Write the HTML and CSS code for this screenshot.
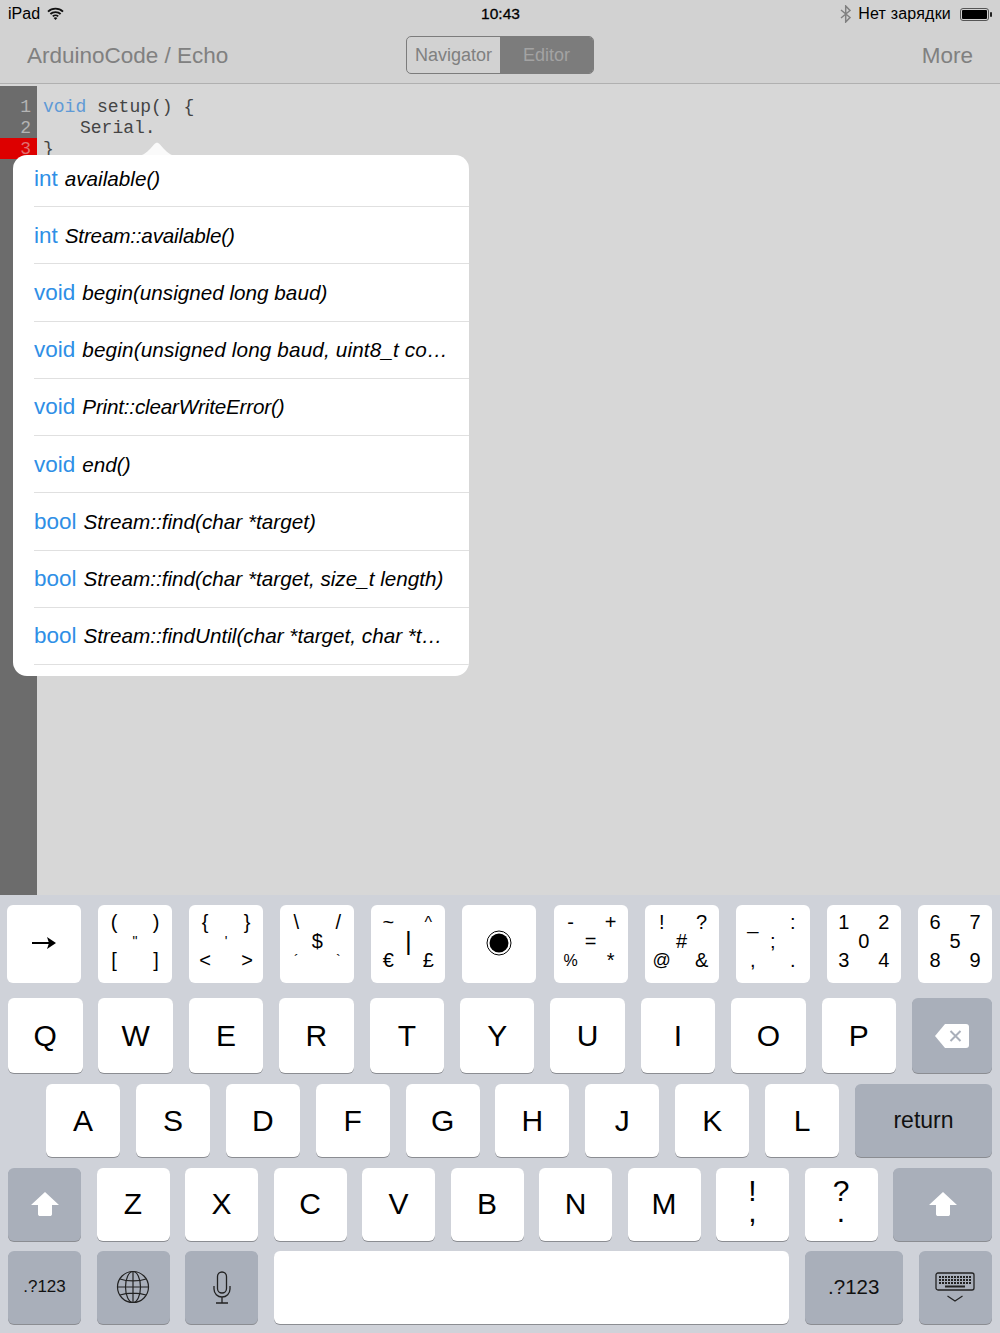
FILE: index.html
```html
<!DOCTYPE html>
<html lang="en">
<head>
<meta charset="utf-8">
<title>ArduinoCode</title>
<link rel="stylesheet" href="styles.css">
</head>
<body>
<div class="screen">
  <header class="status">
    <div class="status-left">
      <span>iPad</span>
      <svg class="wifi" width="17" height="13" viewBox="0 0 17 13"><path d="M1 4.6C5 .6 12 .6 16 4.6M3.4 7C6 4.4 11 4.4 13.6 7M5.8 9.4C7.3 8 9.7 8 11.2 9.4" fill="none" stroke="#111" stroke-width="1.8"/><path d="M8.5 13 6.6 10.9C7.7 10 9.3 10 10.4 10.9Z" fill="#111"/></svg>
    </div>
    <div class="status-time">10:43</div>
    <div class="status-right">
      <svg class="bt" width="12" height="18" viewBox="0 0 12 18"><path d="M1 5 10 12.5 5.7 17V1L10 5.5 1 13" fill="none" stroke="#808080" stroke-width="1.5"/></svg>
      <span class="charge">Нет зарядки</span>
      <svg class="battery" width="33" height="13" viewBox="0 0 33 13"><rect x=".5" y=".5" width="28" height="12" rx="2.5" fill="none" stroke="#555"/><rect x="2" y="2" width="25" height="9" rx="1" fill="#000"/><rect x="30" y="4" width="2" height="5" rx="1" fill="#222"/></svg>
    </div>
  </header>

  <nav class="navbar">
    <div class="nav-title">ArduinoCode / Echo</div>
    <div class="segment">
      <div class="seg seg-off">Navigator</div>
      <div class="seg seg-on">Editor</div>
    </div>
    <div class="nav-more">More</div>
  </nav>

  <main class="editor">
    <div class="gutter">
      <div class="ln">1</div>
      <div class="ln">2</div>
      <div class="ln ln-err">3</div>
    </div>
    <pre class="code"><span class="kw">void</span> setup() {
   <span class="indent">Serial.</span>
}</pre>

    <svg class="pop-arrow" width="38" height="18" viewBox="0 0 38 18"><path d="M0 18C6 17 9 14 12 11L16 6.5C18 4 20 4 22 6.5L26 11C29 14 32 17 38 18Z" fill="#fafafa"/></svg>
    <ul class="popover">
      <li class="item first"><span class="type">int</span> <i>available()</i></li>
      <li class="item"><span class="type">int</span> <i class="tight">Stream::available()</i></li>
      <li class="item"><span class="type">void</span> <i>begin(unsigned long baud)</i></li>
      <li class="item"><span class="type">void</span> <i class="loose">begin(unsigned long baud, uint8_t co…</i></li>
      <li class="item"><span class="type">void</span> <i class="tight">Print::clearWriteError()</i></li>
      <li class="item"><span class="type">void</span> <i>end()</i></li>
      <li class="item"><span class="type">bool</span> <i>Stream::find(char *target)</i></li>
      <li class="item"><span class="type">bool</span> <i>Stream::find(char *target, size_t length)</i></li>
      <li class="item"><span class="type">bool</span> <i>Stream::findUntil(char *target, char *t…</i></li>
    </ul>
  </main>

  <section class="keyboard">
    <div class="row row1">
      <div class="key icon">
        <svg width="26" height="14" viewBox="0 0 26 14"><path d="M1 7H18" stroke="#000" stroke-width="2"/><path d="M16 1 25 7 16 13 18 7Z" fill="#000"/></svg>
      </div>
      <div class="key multi spread"><span class="g">(</span><span></span><span class="g">)</span><span></span><span class="g xs">"</span><span></span><span class="g">[</span><span></span><span class="g">]</span></div>
      <div class="key multi spread"><span class="g">{</span><span></span><span class="g">}</span><span></span><span class="g xs">'</span><span></span><span class="g">&lt;</span><span></span><span class="g">&gt;</span></div>
      <div class="key multi spread"><span class="g">\</span><span></span><span class="g">/</span><span></span><span class="g">$</span><span></span><span class="g xs">´</span><span></span><span class="g xs">`</span></div>
      <div class="key multi"><span class="g">~</span><span></span><span class="g sm">^</span><span></span><span class="g lg">|</span><span></span><span class="g">€</span><span></span><span class="g">£</span></div>
      <div class="key icon">
        <svg width="26" height="26" viewBox="0 0 26 26"><circle cx="13" cy="13" r="12" fill="none" stroke="#000" stroke-width="1"/><circle cx="13" cy="13" r="9.5" fill="#000"/></svg>
      </div>
      <div class="key multi"><span class="g">-</span><span></span><span class="g">+</span><span></span><span class="g">=</span><span></span><span class="g sm">%</span><span></span><span class="g">*</span></div>
      <div class="key multi"><span class="g">!</span><span></span><span class="g">?</span><span></span><span class="g">#</span><span></span><span class="g md">@</span><span></span><span class="g">&amp;</span></div>
      <div class="key multi"><span class="g">_</span><span></span><span class="g">:</span><span></span><span class="g">;</span><span></span><span class="g">,</span><span></span><span class="g">.</span></div>
      <div class="key multi"><span class="g">1</span><span></span><span class="g">2</span><span></span><span class="g">0</span><span></span><span class="g">3</span><span></span><span class="g">4</span></div>
      <div class="key multi"><span class="g">6</span><span></span><span class="g">7</span><span></span><span class="g">5</span><span></span><span class="g">8</span><span></span><span class="g">9</span></div>
    </div>

    <div class="row row2">
      <div class="key">Q</div><div class="key">W</div><div class="key">E</div><div class="key">R</div><div class="key">T</div><div class="key">Y</div><div class="key">U</div><div class="key">I</div><div class="key">O</div><div class="key">P</div>
      <div class="key fn grow">
        <svg width="36" height="26" viewBox="0 0 36 26"><path d="M11 1H32C34 1 35 2 35 4V22C35 24 34 25 32 25H11L1 13Z" fill="#fff"/><path d="M16.500 8 26.500 18M26.500 8 16.500 18" stroke="#a9afba" stroke-width="2"/></svg>
      </div>
    </div>

    <div class="row row3">
      <div class="key">A</div><div class="key">S</div><div class="key">D</div><div class="key">F</div><div class="key">G</div><div class="key">H</div><div class="key">J</div><div class="key">K</div><div class="key">L</div>
      <div class="key fn grow ret">return</div>
    </div>

    <div class="row row4">
      <div class="key fn">
        <svg width="30" height="26" viewBox="0 0 30 26"><path d="M15 1 29 14H22V23C22 24.500 21 25 20 25H10C9 25 8 24.500 8 23V14H1Z" fill="#fff"/></svg>
      </div>
      <div class="key">Z</div><div class="key">X</div><div class="key">C</div><div class="key">V</div><div class="key">B</div><div class="key">N</div><div class="key">M</div>
      <div class="key stack"><span>!</span><span>,</span></div>
      <div class="key stack"><span>?</span><span>.</span></div>
      <div class="key fn grow">
        <svg width="30" height="26" viewBox="0 0 30 26"><path d="M15 1 29 14H22V23C22 24.500 21 25 20 25H10C9 25 8 24.500 8 23V14H1Z" fill="#fff"/></svg>
      </div>
    </div>

    <div class="row row5">
      <div class="key fn sym-s">.?123</div>
      <div class="key fn">
        <svg width="34" height="34" viewBox="0 0 34 34" fill="none" stroke="#222" stroke-width="1.2"><circle cx="17" cy="17" r="15.500"/><ellipse cx="17" cy="17" rx="7.500" ry="15.500"/><path d="M17 1.500V32.500M1.500 17H32.500M4 9C11 11.500 23 11.500 30 9M4 25C11 22.500 23 22.500 30 25"/></svg>
      </div>
      <div class="key fn">
        <svg width="18" height="33" viewBox="0 0 18 33" fill="none" stroke="#222" stroke-width="1.300"><rect x="4.500" y="1" width="9" height="21" rx="4.500"/><path d="M1 15V18C1 22.500 4.500 26 9 26S17 22.500 17 18V15M9 26V32M3 32H15"/></svg>
      </div>
      <div class="key space"></div>
      <div class="key fn wide sym-l">.?123</div>
      <div class="key fn grow">
        <svg width="40" height="30" viewBox="0 0 40 30"><rect x="1" y="1" width="38" height="17" rx="2" fill="none" stroke="#222" stroke-width="1.300"/><path d="M4 5H36M4 8H36M4 11H36" stroke="#222" stroke-width="2" stroke-dasharray="2 1"/><path d="M10 14.500H30" stroke="#222" stroke-width="2"/><path d="M12.500 24 20 29 27.500 24" fill="none" stroke="#222" stroke-width="1.200"/></svg>
      </div>
    </div>
  </section>
</div>
</body>
</html>
```

FILE: styles.css
```css
* { box-sizing: border-box; }
html, body { margin: 0; padding: 0; }
body { font-family: "Liberation Sans", Arial, sans-serif; }
.screen { width: 1000px; height: 1333px; display: flex; flex-direction: column; overflow: hidden; background: #d7d7d7; }

.status { height: 28px; background: #d2d2d2; display: grid; grid-template-columns: 1fr auto 1fr; align-items: center; padding: 0 7px 0 8px; font-size: 16px; color: #000; }
.status-left { display: flex; align-items: center; gap: 7px; }
.wifi { margin-top: -2px; }
.status-time { font-size: 15.500px; -webkit-text-stroke: .3px #000; }
.status-right { display: flex; align-items: center; justify-content: flex-end; }
.bt { margin-right: 6px; }
.charge { margin-right: 9px; letter-spacing: .2px; }

.navbar { height: 56px; background: #d2d2d2; border-bottom: 1px solid #b0b0b0; display: flex; align-items: center; padding: 0 27px; color: #808080; font-size: 22.500px; }
.nav-title { width: 379px; }
.segment { display: flex; width: 188px; height: 38px; margin: 0 auto 2px 0; border: 1.500px solid #7c7c7c; border-radius: 5px; overflow: hidden; font-size: 18px; }
.seg { display: flex; align-items: center; justify-content: center; padding-top: 1px; }
.seg-off { width: 93px; }
.seg-on { flex: 1; background: #7c7c7c; color: #a3a3a3; }

.editor { flex: 1; position: relative; display: flex; padding-top: 2px; background: #d7d7d7; }
.gutter { width: 37px; background: #6c6c6c; padding-top: 10px; }
.ln { height: 21px; padding: 1px 6px 0 0; text-align: right; font: 18px/21px "Liberation Mono", monospace; color: #b4b4b4; }
.ln-err { background: #dd0000; color: #e07070; }
.code { margin: 11px 0 0 6px; font: 18px/21px "Liberation Mono", monospace; color: #444; }
.kw { color: #5f9ad6; }
.indent { margin-left: 4.600px; }

.pop-arrow { position: absolute; left: 138px; top: 54px; }
.popover { position: absolute; left: 13px; top: 71px; width: 456px; height: 521px; margin: 0; padding: 0 0 0 21px; list-style: none; background: #fff; border-radius: 14px; overflow: hidden; }
.item { height: 57.250px; display: flex; align-items: center; gap: 7px; padding-top: 1px; border-bottom: 1px solid #e0e0e0; font-size: 20.700px; white-space: nowrap; color: #000; }
.item.first { height: 52px; padding: 0 0 4px; }
.type { color: #2f8fe6; font-size: 22.500px; }
.tight { letter-spacing: -.2px; }
.loose { letter-spacing: .15px; }

.keyboard { height: 438px; background: #cfd2d9; padding-top: 10px; display: flex; flex-direction: column; flex: none; }
.row { display: flex; }
.row1 { height: 77.500px; padding-left: 7px; gap: 17.100px; }
.row2 { height: 75px; margin-top: 15.500px; padding: 0 8px; gap: 15.900px; }
.row3 { height: 73px; margin-top: 11px; padding: 0 8px 0 46px; gap: 15.900px; }
.row4 { height: 72.500px; margin-top: 11px; padding: 0 8px; gap: 15.500px; }
.row5 { height: 72.500px; margin-top: 10.500px; padding: 0 8px; gap: 15.500px; }

.key { width: 74px; flex: none; background: #fff; border-radius: 6px; box-shadow: 0 1px 0 #8b8d92; display: flex; align-items: center; justify-content: center; font-size: 30px; color: #000; }
.row1 .key { box-shadow: none; }
.row2 .key { width: 74.500px; }
.row4 .key, .row5 .key { width: 73px; }
.row .fn { background: #a9afba; }
.row .grow { flex: 1; width: auto; }
.ret { font-size: 23px; color: #111; }
.sym-s { font-size: 17px; color: #111; }
.sym-l { font-size: 20.500px; color: #111; }
.row5 .wide { width: 98.500px; }
.row5 .space { width: 515.500px; }

.icon svg { margin-bottom: 1px; }
.multi { display: grid; grid-template-columns: repeat(3, 20px); grid-template-rows: repeat(3, 19px); justify-content: center; align-content: center; padding-bottom: 5px; font-size: 20px; }
.multi.spread { grid-template-columns: 22px 20px 22px; }
.g { display: flex; align-items: center; justify-content: center; line-height: 19px; }
.xs { font-size: 14px; }
.sm { font-size: 16px; }
.md { font-size: 18px; }
.lg { font-size: 26px; }

.stack { flex-direction: column; line-height: 21px; padding-bottom: 6px; }
```
